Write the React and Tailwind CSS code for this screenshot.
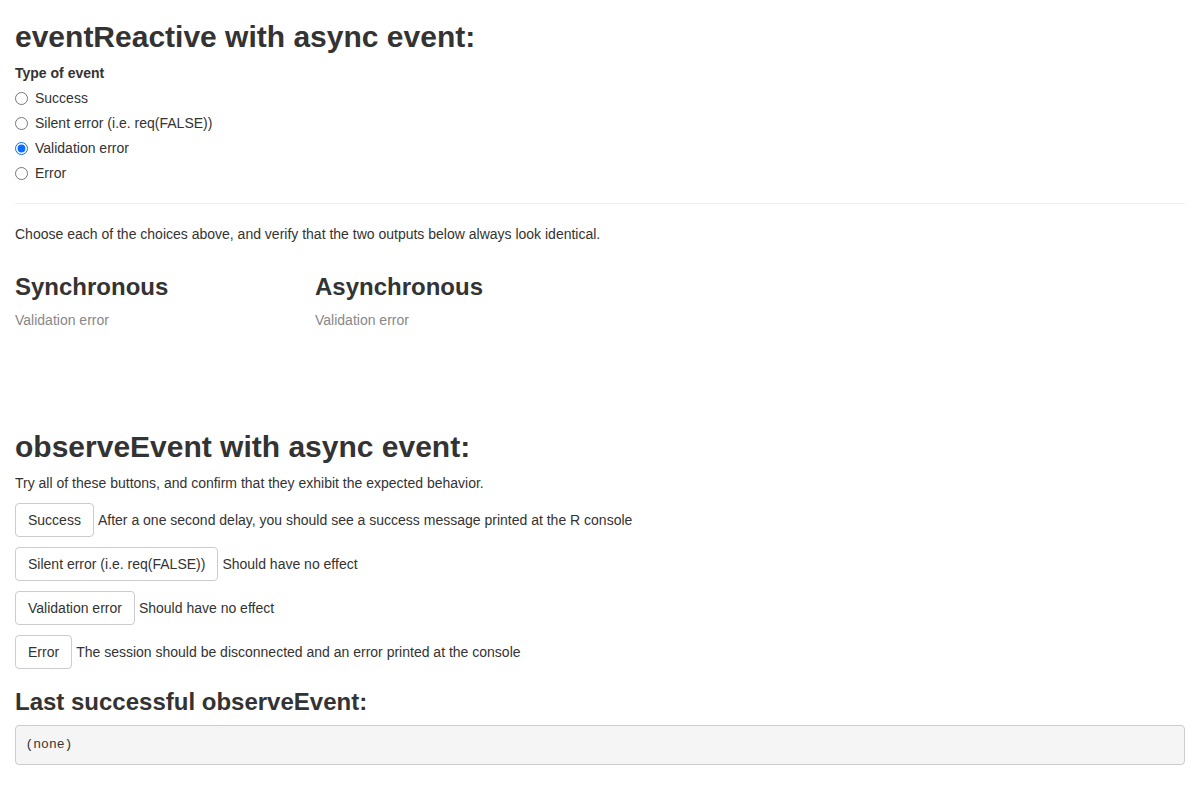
export default function App() {
  const radios = [
    { label: "Success", checked: false },
    { label: "Silent error (i.e. req(FALSE))", checked: false },
    { label: "Validation error", checked: true },
    { label: "Error", checked: false },
  ];
  const actions = [
    { btn: "Success", note: "After a one second delay, you should see a success message printed at the R console" },
    { btn: "Silent error (i.e. req(FALSE))", note: "Should have no effect" },
    { btn: "Validation error", note: "Should have no effect" },
    { btn: "Error", note: "The session should be disconnected and an error printed at the console" },
  ];

  return (
    <div className="min-h-screen bg-white px-[15px] font-['Liberation_Sans',Arial,sans-serif] text-[14px] leading-[20px] text-[#333]">
      {/* eventReactive section */}
      <h2 className="mt-5 mb-2.5 text-[30px] font-bold leading-[33px]">eventReactive with async event:</h2>
      <div className="mb-[15px]">
        <div className="mb-[5px] font-bold">Type of event</div>
        <div className="flex flex-col gap-[5px]">
          {radios.map((r) => (
            <label key={r.label} className="flex h-5 items-center gap-[7px]">
              <input type="radio" name="evt" defaultChecked={r.checked} className="m-0 h-[13px] w-[13px] accent-[#0a6cff]" />
              <span>{r.label}</span>
            </label>
          ))}
        </div>
      </div>
      <hr className="mt-5 mb-5 border-0 border-t border-[#eee]" />
      <p className="mb-2.5">Choose each of the choices above, and verify that the two outputs below always look identical.</p>
      <div className="flex">
        <div className="w-[300px]">
          <h3 className="mt-5 mb-2.5 text-[24px] font-bold leading-[26px]">Synchronous</h3>
          <div className="text-[#888]">Validation error</div>
        </div>
        <div className="w-[300px]">
          <h3 className="mt-5 mb-2.5 text-[24px] font-bold leading-[26px]">Asynchronous</h3>
          <div className="text-[#888]">Validation error</div>
        </div>
      </div>

      {/* observeEvent section */}
      <h2 className="mt-[100px] mb-2.5 text-[30px] font-bold leading-[33px]">observeEvent with async event:</h2>
      <p className="mb-2.5">Try all of these buttons, and confirm that they exhibit the expected behavior.</p>
      <div className="flex flex-col gap-2.5">
        {actions.map((a) => (
          <div key={a.btn} className="flex items-baseline gap-1">
            <button className="h-[34px] rounded border border-[#ccc] bg-white px-3 py-1.5 leading-5 text-[#333]">{a.btn}</button>
            <span>{a.note}</span>
          </div>
        ))}
      </div>
      <h3 className="mt-5 mb-2.5 text-[24px] font-bold leading-[26px]">Last successful observeEvent:</h3>
      <pre className="mb-2.5 rounded border border-[#ccc] bg-[#f5f5f5] px-[9.5px] py-[9.5px] font-['Liberation_Mono',monospace] text-[13px] leading-[18.5px] text-[#333]">(none)</pre>
    </div>
  );
}
